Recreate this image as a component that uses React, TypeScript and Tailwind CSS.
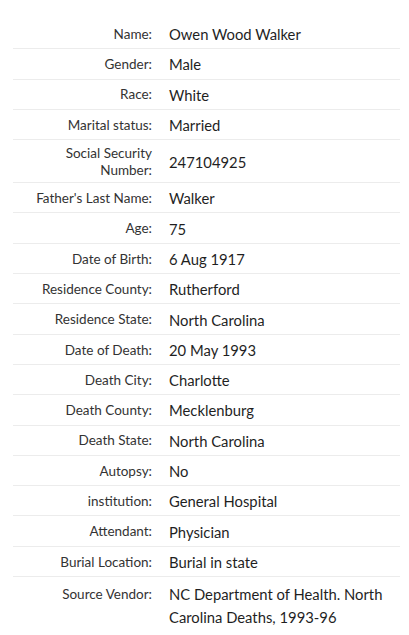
const rows: { label: string; value: string }[] = [
  { label: "Name:", value: "Owen Wood Walker" },
  { label: "Gender:", value: "Male" },
  { label: "Race:", value: "White" },
  { label: "Marital status:", value: "Married" },
  { label: "Social Security Number:", value: "247104925" },
  { label: "Father's Last Name:", value: "Walker" },
  { label: "Age:", value: "75" },
  { label: "Date of Birth:", value: "6 Aug 1917" },
  { label: "Residence County:", value: "Rutherford" },
  { label: "Residence State:", value: "North Carolina" },
  { label: "Date of Death:", value: "20 May 1993" },
  { label: "Death City:", value: "Charlotte" },
  { label: "Death County:", value: "Mecklenburg" },
  { label: "Death State:", value: "North Carolina" },
  { label: "Autopsy:", value: "No" },
  { label: "institution:", value: "General Hospital" },
  { label: "Attendant:", value: "Physician" },
  { label: "Burial Location:", value: "Burial in state" },
  { label: "Source Vendor:", value: "NC Department of Health. North Carolina Deaths, 1993-96" },
];

export default function App() {
  return (
    <div
      className="bg-white pt-[19px] pl-[13px] pr-[9px]"
      style={{ fontFamily: "Lato, 'Open Sans', sans-serif" }}
    >
      {rows.map((row, i) => {
        const last = i === rows.length - 1;
        const tall = row.label.length > 20;
        return (
          <div
            key={i}
            className={
              "grid grid-cols-[139px_1fr] gap-[17px] " +
              (last
                ? "items-start pt-[6px] pb-3"
                : "items-center pt-[2px] border-b border-[#ececec] " +
                  (tall ? "h-[43px]" : "h-[30.3px]"))
            }
          >
            <div
              className={
                "text-right text-[13.5px] leading-[17.5px] text-[#333] " + (last ? "pt-[3px]" : "")
              }
            >
              {row.label}
            </div>
            <div className={"text-[14.8px] leading-[23px] text-[#1f1f1f] " + (last ? "pr-2" : "")}>
              {row.value}
            </div>
          </div>
        );
      })}
    </div>
  );
}
